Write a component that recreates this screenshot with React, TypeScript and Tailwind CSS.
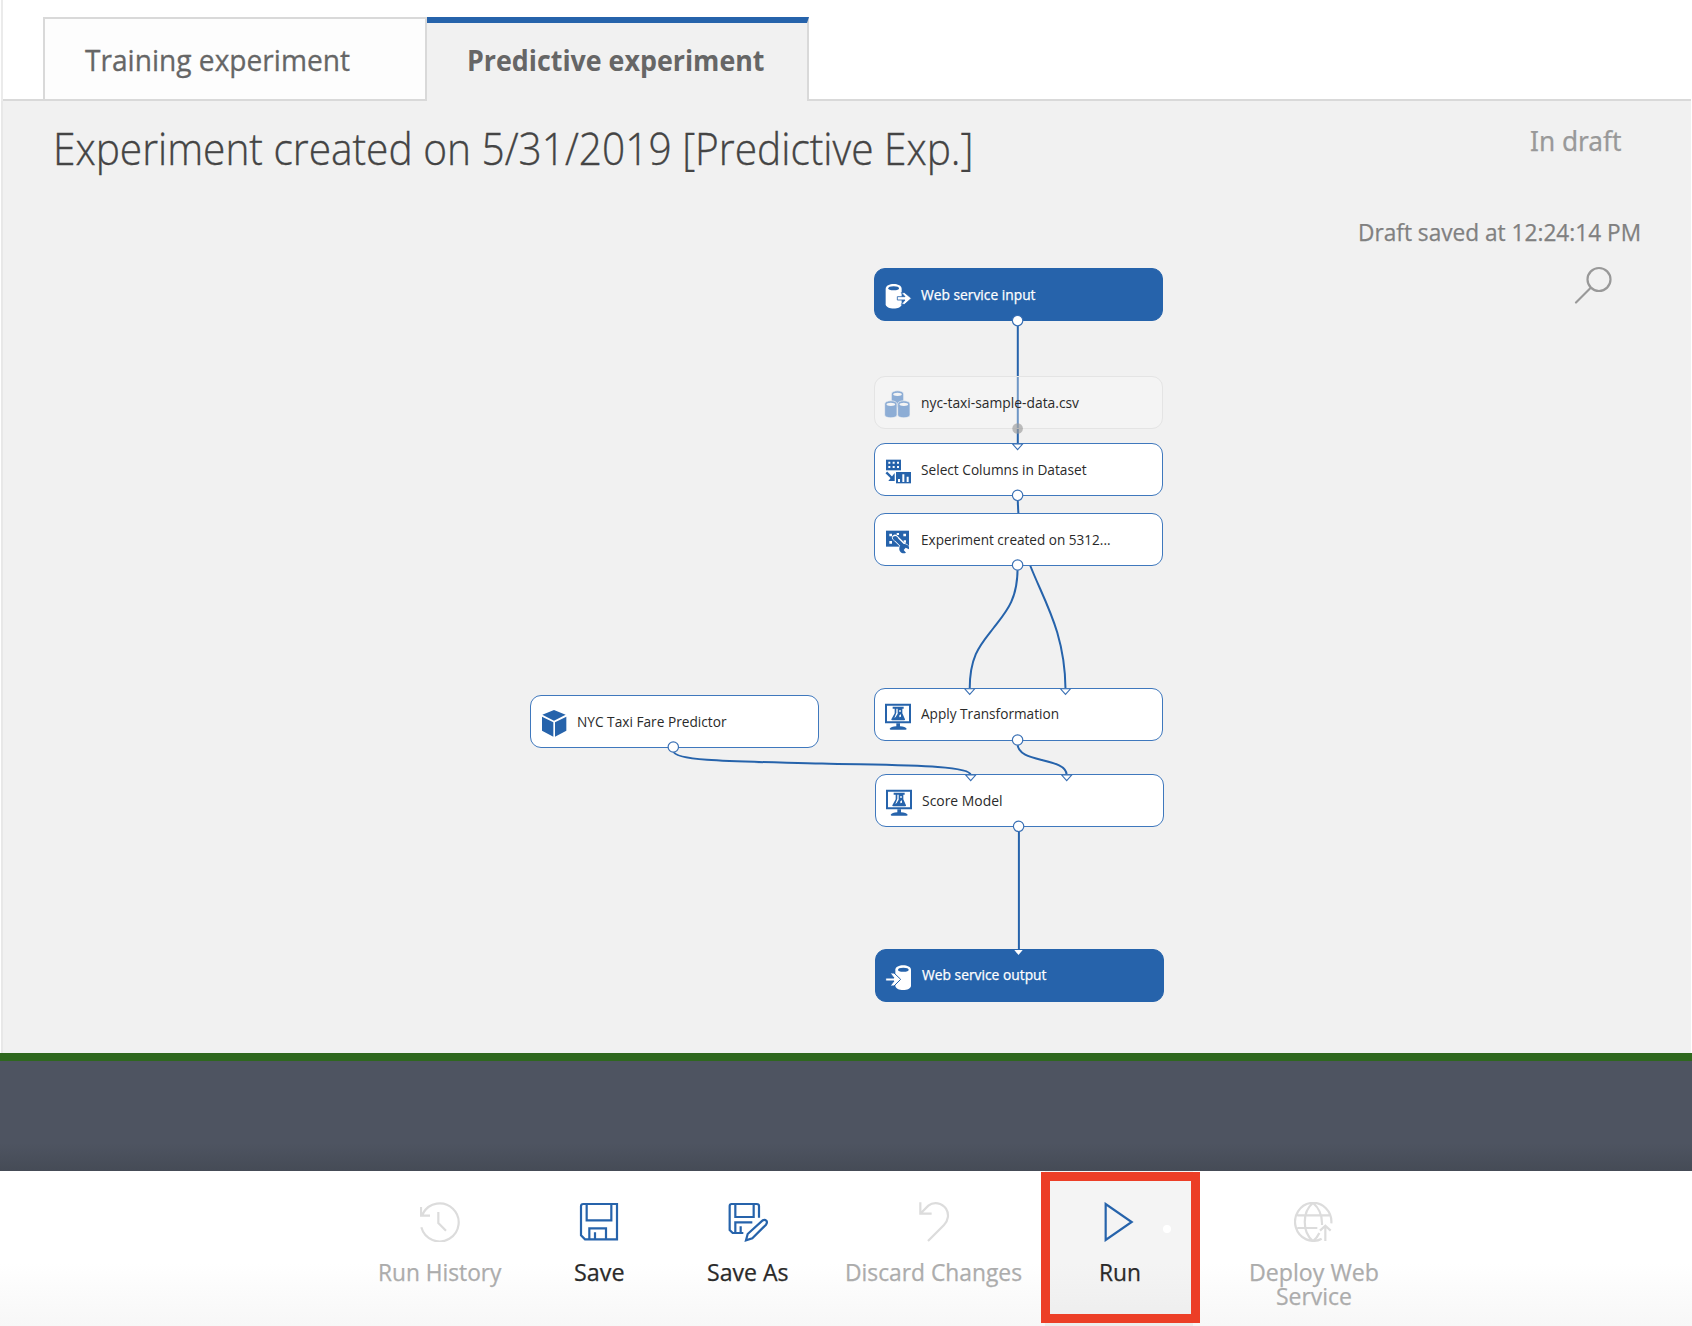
import { useLayoutEffect, useRef, useState } from "react";
import type { ReactNode } from "react";

const BLUE = "#2663ab";

/* Single line of text condensed or widened to an exact width. */
function Fit({ w, className, children }: { w: number; className?: string; children: string }) {
  const ref = useRef<HTMLSpanElement>(null);
  const [scale, setScale] = useState(1);
  useLayoutEffect(() => {
    const el = ref.current;
    if (!el) return;
    const ctx = document.createElement("canvas").getContext("2d");
    if (!ctx) return;
    const s = getComputedStyle(el);
    ctx.font = `${s.fontWeight} ${s.fontSize} ${s.fontFamily}`;
    setScale(w / ctx.measureText(children).width);
  }, [w, children]);
  return (
    <span className="block shrink-0" style={{ width: w }}>
      <span
        ref={ref}
        className={"inline-block origin-left whitespace-nowrap " + (className ?? "")}
        style={{ transform: `scaleX(${scale})` }}
      >
        {children}
      </span>
    </span>
  );
}

function NodeIcon({ children }: { children: ReactNode }) {
  return (
    <svg className="mt-[3px] h-7 w-7 shrink-0" viewBox="29 42 84 84" fill="none">
      {children}
    </svg>
  );
}

function InputIcon() {
  return (
    <NodeIcon>
      <path d="M34 62C34 43 82 43 82 62V109C82 126 34 126 34 109Z" fill="white" />
      <ellipse cx="58" cy="61" rx="16" ry="6" fill={BLUE} />
      <path d="M69 86H92L81 74H91L111 91L91 109H81L92 96H69Z" fill="white" stroke={BLUE} strokeWidth="2.5" />
    </NodeIcon>
  );
}

function OutputIcon() {
  return (
    <NodeIcon>
      <path d="M60 62C60 44 107 44 107 62V110C107 127 60 127 60 110Z" fill="white" />
      <ellipse cx="84" cy="62" rx="16" ry="6" fill={BLUE} />
      <path d="M44 72H56L76 91L56 111H44L56 96H31V87H56Z" fill="white" stroke={BLUE} strokeWidth="3" />
    </NodeIcon>
  );
}

function DataIcon() {
  const can = "M0 10C0-3 37-3 37 10V43C37 54 0 54 0 43Z";
  return (
    <NodeIcon>
      <g fill="#8dadd5" stroke="#f4f4f4" strokeWidth="2">
        <path d={can} transform="translate(51 44)" />
        <path d={can} transform="translate(31 74)" />
        <path d={can} transform="translate(70 74)" />
      </g>
      <g fill="#f4f4f4">
        <ellipse cx="69.500" cy="55" rx="13" ry="5" />
        <ellipse cx="49.500" cy="85" rx="13" ry="5" />
        <ellipse cx="88.500" cy="85" rx="13" ry="5" />
      </g>
    </NodeIcon>
  );
}

function ColumnsIcon() {
  return (
    <NodeIcon>
      <path d="M35 50H80V82H35Z" fill={BLUE} />
      <path d="M42 56h6v6h-6zM55 56h6v6h-6zM68 56h6v6h-6zM42 69h6v6h-6zM55 69h6v6h-6zM68 69h6v6h-6z" fill="white" />
      <path d="M36 88L56 108" stroke={BLUE} strokeWidth="7" />
      <path d="M61 90V114H42Z" fill={BLUE} />
      <path d="M65 87H110V121H65Z" fill={BLUE} />
      <path d="M71 108h6v9h-6zM84 94h6v23h-6zM97 101h6v16h-6z" fill="white" />
    </NodeIcon>
  );
}

function WrenchIcon() {
  return (
    <NodeIcon>
      <path d="M35 53H104V101H35Z" fill={BLUE} />
      <path d="M45 62h8v8h-8zM67 60h7v6h-7zM87 62h8v8h-8zM45 84h8v8h-8zM88 82h7v7h-7z" fill="white" />
      <path d="M62 74L86 97" stroke="white" strokeWidth="18" strokeLinecap="round" />
      <circle cx="90" cy="107" r="16" fill="white" />
      <path d="M64 77L88 101" stroke={BLUE} strokeWidth="11" />
      <path d="M55 72Q62 68 66 70L72 76L62 84Q54 80 55 72Z" fill={BLUE} />
      <path d="M75 104C76 92 97 88 104 101V109L94 104L88 111L95 119C85 124 73 117 75 104Z" fill={BLUE} />
    </NodeIcon>
  );
}

function FlaskIcon() {
  return (
    <NodeIcon>
      <path d="M35 50H107V103H35Z" fill="white" stroke={BLUE} strokeWidth="6" />
      <path d="M55 56H88V62H84V76L92 94Q93 97 89 97H54Q50 97 51 94L61 76V62H55Z" fill={BLUE} />
      <path d="M66 62H70V77L64 87L60 90L66 74ZM75 66H79V72H75ZM75 82L80 79L80 86L75 88Z" fill="white" />
      <path d="M66 106H77V115Q93 116 97 122Q97 125 93 125H50Q46 125 46 122Q50 116 66 115Z" fill={BLUE} />
    </NodeIcon>
  );
}

function CubeIcon() {
  return (
    <NodeIcon>
      <path d="M71 45L106 59L71 77L36 59ZM35 65L69 82V125L35 107ZM108 65V107L74 125V82Z" fill={BLUE} />
    </NodeIcon>
  );
}

type NodeProps = {
  className: string;
  icon: ReactNode;
  label: string;
  w: number;
};

function GraphNode({ className, icon, label, w }: NodeProps) {
  return (
    <div
      className={
        "absolute flex h-[52.5px] w-[289px] items-center gap-[9px] rounded-[11px] border-[1.5px] pl-[9px] text-[14.2px] leading-5 " +
        className
      }
    >
      {icon}
      <Fit w={w}>{label}</Fit>
    </div>
  );
}

const PLAIN = "border-[#3f78bd] bg-white text-[#2a2a2a] ";
const SOLID = "border-[#2663ab] bg-[#2663ab] text-white [-webkit-text-stroke:0.25px] ";

function Wires() {
  return (
    <svg className="absolute left-0 top-0 h-[1053px] w-[1692px]" viewBox="0 0 1692 1053" fill="none" stroke={BLUE} strokeWidth="2">
      <path d="M1017.800 322V444" />
      <path d="M1017.600 498L1018.400 514" />
      <path d="M1017.600 568C1017.600 600 1006 612 993.500 628S969.700 655 969.700 689" />
      <path d="M1030 565C1044 601 1065 632 1065.500 689" />
      <path d="M1017.600 744C1017.600 754 1030 757 1042 760S1066.700 766 1066.700 775" />
      <path d="M673.300 751C674 762 745 761.500 822 763.500S970 765 970.700 775" />
      <path d="M1018.900 830V950" />
    </svg>
  );
}

function Ports() {
  const outs = [
    [1017.6, 320.6],
    [1017.6, 495.3],
    [1017.6, 565],
    [1017.6, 740],
    [1018.6, 826.3],
    [673.3, 747],
  ];
  const ins = [
    [1017.6, 444],
    [969.7, 688.8],
    [1065.5, 688.8],
    [970.7, 775],
    [1066.7, 775],
  ];
  return (
    <svg className="absolute left-0 top-0 h-[1053px] w-[1692px]" viewBox="0 0 1692 1053">
      <circle cx="1017.600" cy="428.500" r="5.300" fill="#9b9b9b" fillOpacity="0.65" />
      {outs.map(([x, y]) => (
        <circle key={`${x}-${y}`} cx={x} cy={y} r="5.200" fill="white" stroke="#3a70b4" strokeWidth="1.200" />
      ))}
      {ins.map(([x, y]) => (
        <path key={`${x}-${y}`} d={`M${x - 5} ${y}H${x + 5}L${x} ${y + 5.6}Z`} fill="white" stroke="#3a70b4" strokeWidth="1.100" />
      ))}
      <path d="M1014.300 950H1022.700L1018.500 955Z" fill="white" />
    </svg>
  );
}

function ToolButton({
  className,
  icon,
  children,
}: {
  className: string;
  icon: ReactNode;
  children: ReactNode;
}) {
  return (
    <div
      className={
        "flex flex-col items-center pt-[31px] text-[23.4px] leading-6 [-webkit-text-stroke:0.25px] " + className
      }
    >
      {icon}
      <div className="mt-[17.6px] flex flex-col items-center">{children}</div>
    </div>
  );
}

function ToolIcon({ viewBox, stroke, children }: { viewBox: string; stroke: string; children: ReactNode }) {
  return (
    <svg className="h-10 w-10 shrink-0" viewBox={viewBox} fill="none" stroke={stroke} strokeWidth="6.600">
      {children}
    </svg>
  );
}

export default function App() {
  return (
    <div className="flex h-[1326px] w-[1692px] flex-col overflow-hidden bg-white font-['Open_Sans','Noto_Sans',sans-serif]">
      <div className="mx-px flex h-[101px] shrink-0 items-end border-l-2 border-[#ebebeb]">
        <div className="h-full w-10 border-b-2 border-[#d9d9d9]" />
        <div className="flex h-[84px] w-[384px] items-center border-2 border-[#d9d9d9] bg-[#fdfdfd] pl-[40px] pt-[2px] text-[29.4px] text-[#666] [-webkit-text-stroke:0.3px]">
          <Fit w={265}>Training experiment</Fit>
        </div>
        <div className="flex h-[84px] w-[382px] items-center border-r-2 border-t-[6px] border-r-[#d9d9d9] border-t-[#2663ab] bg-[#f1f1f1] pb-1 pl-[39.5px] text-[29.4px] text-[#666]">
          <Fit w={297.5} className="font-bold">Predictive experiment</Fit>
        </div>
        <div className="h-full flex-1 border-b-2 border-[#d9d9d9]" />
      </div>

      <div className="relative mx-px h-[952px] shrink-0 border-l-2 border-[#e8e8e8] bg-[#f1f1f1]">
        <div className="flex justify-between pl-[49.500px] pt-[18px]">
          <h1 className="text-[43.5px] leading-[60px] text-[#444] [-webkit-text-stroke:0.35px]">
            <Fit w={920.5} className="font-light">Experiment created on 5/31/2019 [Predictive Exp.]</Fit>
          </h1>
          <div className="flex w-[180px] flex-col pl-[18.500px] pt-[7px] font-['Noto_Sans',sans-serif] text-[27.500px] leading-[30px] text-[#999] [-webkit-text-stroke:0.25px]">
            <Fit w={91.5}>In draft</Fit>
          </div>
        </div>
        <div className="flex justify-end pr-[50.500px] pt-[39px] text-[23.4px] leading-7 text-[#808080] [-webkit-text-stroke:0.25px]">
          <Fit w={283}>Draft saved at 12:24:14 PM</Fit>
        </div>
        <div className="flex justify-end pr-[77px] pt-[19px]">
          <svg className="h-10 w-10" viewBox="0 0 40 40" fill="none" stroke="#999" strokeWidth="2.200">
            <circle cx="25" cy="14.500" r="11.500" />
            <path d="M16.500 23L2 37.500" strokeLinecap="round" />
          </svg>
        </div>

        <div className="absolute -left-[3px] -top-[101px]">
          <Wires />
          <GraphNode className={SOLID + "left-[874.3px] top-[268.3px]"} icon={<InputIcon />} label="Web service input" w={114.5} />
          <GraphNode
            className="left-[874.3px] top-[376.3px] border-[#e4e4e4] bg-[#f8f8f8]/35 text-[#2a2a2a]"
            icon={<DataIcon />}
            label="nyc-taxi-sample-data.csv"
            w={158}
          />
          <GraphNode className={PLAIN + "left-[874.3px] top-[443.3px]"} icon={<ColumnsIcon />} label="Select Columns in Dataset" w={165.5} />
          <GraphNode className={PLAIN + "left-[874.3px] top-[513.3px]"} icon={<WrenchIcon />} label="Experiment created on 5312..." w={189.5} />
          <GraphNode className={PLAIN + "left-[874.3px] top-[688px]"} icon={<FlaskIcon />} label="Apply Transformation" w={138} />
          <GraphNode className={PLAIN + "left-[530px] top-[695.3px]"} icon={<CubeIcon />} label="NYC Taxi Fare Predictor" w={149.5} />
          <GraphNode className={PLAIN + "left-[875.3px] top-[774.3px]"} icon={<FlaskIcon />} label="Score Model" w={80.5} />
          <GraphNode className={SOLID + "left-[875.3px] top-[949px]"} icon={<OutputIcon />} label="Web service output" w={124.5} />
          <Ports />
        </div>
      </div>

      <div className="h-2 shrink-0 bg-[#2e671e]" />
      <div className="h-[110px] shrink-0 bg-[linear-gradient(#4e5461_0,#4e5461_75%,#454b56_100%)]" />

      <div className="flex h-[155px] shrink-0 bg-[linear-gradient(#ffffff_0,#ffffff_60%,#f7f7f7_100%)] pl-[360px]">
        <ToolButton
          className="w-[159px] text-[#acacac]"
          icon={
            <ToolIcon viewBox="180 126 120 120" stroke="#dcdcdc">
              <path d="M184 202A57 57 0 1 0 189 160M183 141V167H210M187 165L193 154M235 156V189L258 212" />
            </ToolIcon>
          }
        >
          <Fit w={123.5}>Run History</Fit>
        </ToolButton>
        <ToolButton
          className="w-40 text-[#2a2a2a]"
          icon={
            <ToolIcon viewBox="659 126 120 120" stroke={BLUE}>
              <path d="M672 132H773V238H677L665 226V139Q665 132 672 132ZM682 132V181H756V132M690 238V205H740V238M707 217V238" />
            </ToolIcon>
          }
        >
          <Fit w={50.5}>Save</Fit>
        </ToolButton>
        <ToolButton
          className="w-[137px] text-[#2a2a2a]"
          icon={
            <ToolIcon viewBox="1103 126 120 120" stroke={BLUE}>
              <path d="M1196 173V138Q1196 132 1189 132H1114Q1108 132 1108 138V210L1117 219H1149M1125 132V171H1180V132M1125 219V187H1176M1141 199V219" />
              <path d="M1157 241L1162 222L1206 182Q1213 177 1218 182Q1222 187 1217 194L1176 235Z" />
            </ToolIcon>
          }
        >
          <Fit w={81.5}>Save As</Fit>
        </ToolButton>
        <ToolButton
          className="ml-2.5 w-[215px] text-[#acacac]"
          icon={
            <ToolIcon viewBox="340 126 120 120" stroke="#dcdcdc">
              <path d="M359 127V161H393M361 159L383 137C399 124 424 128 436 146C446 162 443 182 430 195L382 243" />
            </ToolIcon>
          }
        >
          <Fit w={177}>Discard Changes</Fit>
        </ToolButton>
        <div className="relative ml-1 mr-[37px] w-[148px] bg-[linear-gradient(#f4f4f4_0,#f4f4f4_60%,#ededed_100%)]">
          <ToolButton
            className="w-[150px] text-[#2a2a2a]"
            icon={
              <ToolIcon viewBox="900 126 120 120" stroke={BLUE}>
                <path d="M917 132V240L995 186Z" />
              </ToolIcon>
            }
          >
            <Fit w={42}>Run</Fit>
          </ToolButton>
          <span className="absolute left-[118px] top-[54px] h-2 w-2 rounded-full bg-white" />
          <div className="absolute -left-1 top-[0.5px] h-[151.5px] w-[158.5px] border-[9px] border-[#ec3e26]" />
        </div>
        <ToolButton
          className="w-[168px] text-[#acacac]"
          icon={
            <ToolIcon viewBox="282 126 120 120" stroke="#dcdcdc">
              <path d="M394 190A54.500 57 0 1 0 365 236M339 129C306 155 306 216 339 243M339 129C361 147 367 170 366 195M339 243Q352 233 358 219M292 166H388M292 204H352M376 243V199M360 212L376 197L392 212" />
            </ToolIcon>
          }
        >
          <Fit w={130}>Deploy Web</Fit>
          <Fit w={76}>Service</Fit>
        </ToolButton>
      </div>
    </div>
  );
}
